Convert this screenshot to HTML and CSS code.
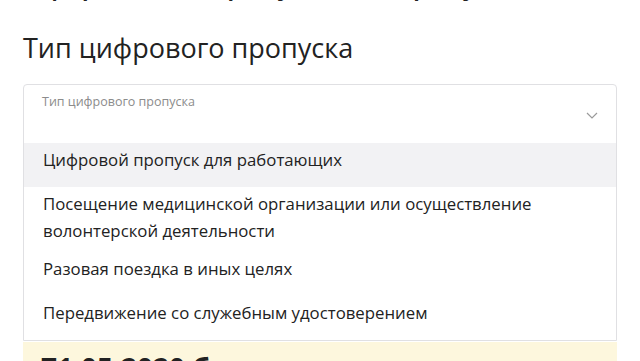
FILE: index.html
```html
<!DOCTYPE html>
<html lang="ru">
<head>
    <meta charset="UTF-8">
    <meta name="viewport" content="width=device-width, initial-scale=1.0">
    <title>Цифровой пропуск</title>
    <link rel="stylesheet" href="styles.css">
</head>
<body>
    <div class="page">
        <h2 class="prev-title">Оформление пропуска по городу</h2>

        <h2 class="section-title">Тип цифрового пропуска</h2>

        <div class="select">
            <div class="select-field">
                <span class="select-label">Тип цифрового пропуска</span>
                <svg class="chevron" width="12" height="7" viewBox="0 0 12 7">
                    <path d="M1 1 L6 6 L11 1" fill="none" stroke="#9a9a9a" stroke-width="1.2"/>
                </svg>
            </div>
            <ul class="options">
                <li class="option active">Цифровой пропуск для работающих</li>
                <li class="option two-line">Посещение медицинской организации или осуществление волонтерской деятельности</li>
                <li class="option">Разовая поездка в иных целях</li>
                <li class="option">Передвижение со служебным удостоверением</li>
            </ul>
        </div>

        <div class="notice">
            <b>71.05.2020 был выдан пропуск</b>
        </div>
    </div>
</body>
</html>
```

FILE: styles.css
```css
:root {
    --text-color: #222222;
    --muted-color: #8c8c8c;
    --border-color: #e0e0e3;
    --hover-color: #f2f2f4;
    --notice-color: #fdf7dd;
}

body {
    margin: 0;
    font-family: "Open Sans", "Noto Sans", sans-serif;
    color: var(--text-color);
    background: white;
    overflow: hidden;
}

.page {
    padding: 0 23px;
}

.prev-title {
    margin: -34px 0 0;
    font-size: 27px;
    line-height: 36px;
    font-weight: 600;
}

.section-title {
    margin: 0;
    padding-top: 28px;
    font-size: 27px;
    line-height: 36px;
    font-weight: 500;
}

.select {
    margin-top: 18px;
    border: 1px solid var(--border-color);
    border-radius: 4px 4px 0 0;
}

.select-field {
    position: relative;
    height: 58px;
    padding: 4px 18px 0;
    box-sizing: border-box;
}

.select-label {
    font-size: 12.5px;
    color: var(--muted-color);
}

.chevron {
    position: absolute;
    right: 18px;
    top: 27px;
}

.options {
    list-style: none;
    margin: 0;
    padding: 0;
}

.option {
    min-height: 44px;
    padding: 3px 60px 14px 19px;
    box-sizing: border-box;
    font-size: 16.8px;
    line-height: 27px;
}

.option.active {
    background: var(--hover-color);
}

.option.two-line {
    padding-bottom: 8px;
}

.notice {
    margin-top: 1px;
    padding: 8px 18px;
    background: var(--notice-color);
    font-size: 28px;
    line-height: 36px;
}
```
